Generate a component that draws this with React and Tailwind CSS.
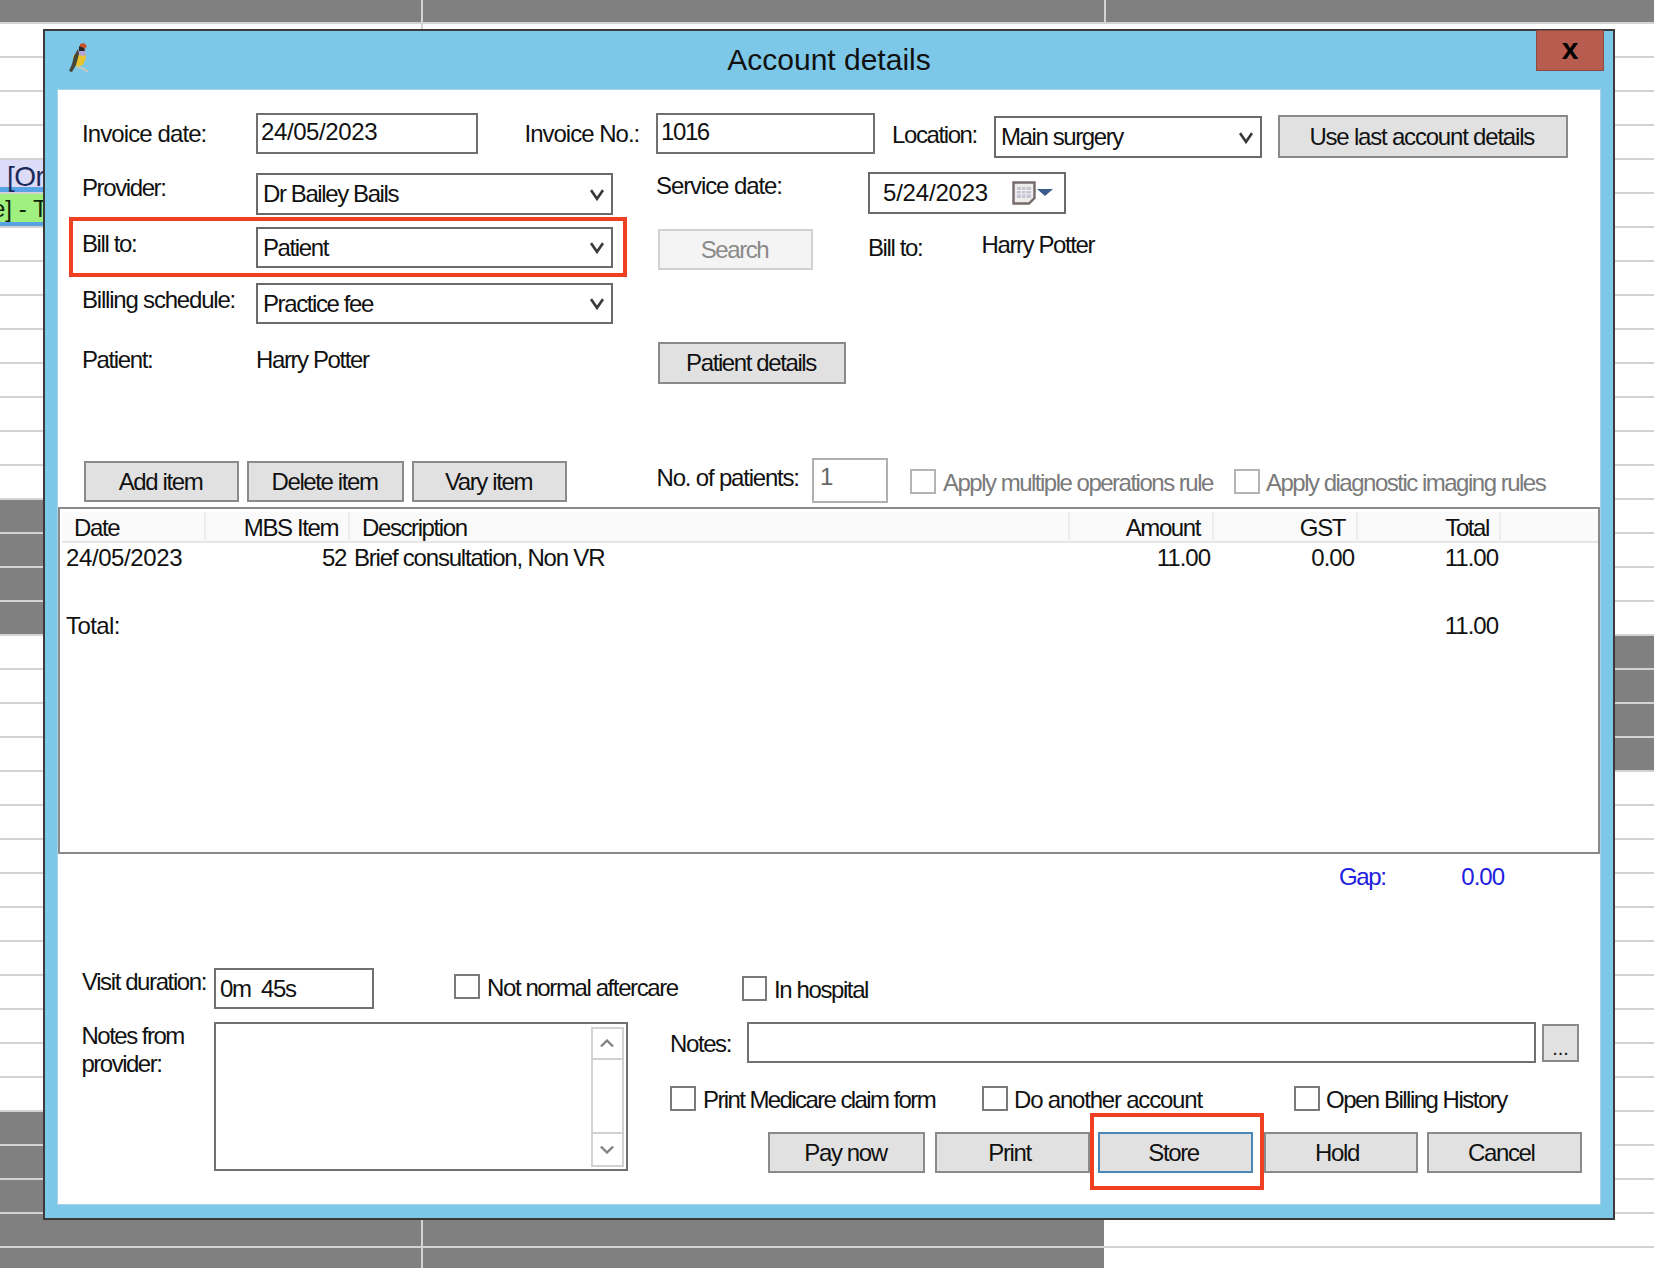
import { Fragment } from "react";

const ROWS = Array.from({ length: 38 }, (_, i) => i);

function GridRow({ i }) {
  const leftGray = i === 0 || (i >= 15 && i <= 18) || i >= 33;
  const midGray = i === 0 || i >= 33;
  const rightGray = i === 0 || (i >= 19 && i <= 22);
  return (
    <div className={`flex shrink-0 border-b-2 border-[#d3d3d3] ${i === 0 ? "h-[24px]" : "h-[34px]"}`}>
      <div className={`w-[421px] shrink-0 overflow-hidden ${leftGray ? "bg-[#808080]" : "bg-white"}`}>
        {i === 5 && <div className="h-full pl-[7px] pt-[3px] bg-[#dcdcf8] border-b-[5px] border-[#5aa2e6] text-[28px] leading-[28px] tracking-[-0.5px] text-[#1c2a5a] whitespace-pre">[Or</div>}
        {i === 6 && <div className="h-full -ml-[8px] pt-[2px] bg-[#a0f080] border-b-[4px] border-[#5aa2e6] text-[24px] leading-[26px] tracking-[0px] text-[#10240c] whitespace-pre">e] - T</div>}
      </div>
      <div className={`w-[683px] shrink-0 border-l-2 border-[#d3d3d3] ${midGray ? "bg-[#808080]" : "bg-white"}`} />
      <div className={`flex-1 ${i === 0 ? "border-l-2 border-[#d3d3d3]" : ""} ${rightGray ? "bg-[#808080]" : "bg-white"}`} />
    </div>
  );
}

function Lbl({ className = "", children }) {
  return <div className={`shrink-0 leading-[28px] whitespace-nowrap ${className}`}>{children}</div>;
}

function Input({ className = "", muted = false, children }) {
  return (
    <div className={`shrink-0 bg-white border-2 pt-[3px] leading-[28px] whitespace-pre ${muted ? "border-[#b0b0b0] pl-[6px] text-[#666]" : "border-[#707070] pl-[3px]"} ${className}`}>
      {children}
    </div>
  );
}

function Chevron({ up = false, className = "" }) {
  return (
    <svg viewBox="0 0 14 12" className={`shrink-0 ${className}`} fill="none" preserveAspectRatio="none">
      <polyline points={up ? "1,10 7,2 13,10" : "1,2 7,10 13,2"} stroke="currentColor" strokeWidth="2.6" />
    </svg>
  );
}

function Sel({ className = "", children }) {
  return (
    <div className={`shrink-0 flex items-center justify-between bg-white border-2 border-[#6a6a6a] pl-[5px] pr-[7px] whitespace-nowrap ${className}`}>
      <span>{children}</span>
      <Chevron className="w-[14px] h-[13px] text-[#3a3a3a]" />
    </div>
  );
}

const BTN_TONES = {
  normal: "bg-[#e1e1e1] border-[#8a8a8a]",
  disabled: "bg-[#f4f4f4] border-[#d2d2d2] text-[#8a8a8a]",
  focused: "bg-[#e1e1e1] border-[#4a86b8]",
};

function Btn({ className = "", tone = "normal", children }) {
  return (
    <div className={`shrink-0 flex items-center justify-center border-2 whitespace-nowrap ${BTN_TONES[tone]} ${className}`}>
      {children}
    </div>
  );
}

function Chk({ className = "", box = "w-[26px]", gap = "ml-[7px]", muted = false, children }) {
  return (
    <div className={`shrink-0 flex items-start ${className}`}>
      <div className={`h-[25px] shrink-0 bg-white border-2 ${muted ? "border-[#b4b4b4]" : "border-[#7a7a7a]"} ${box}`} />
      <span className={`leading-[28px] whitespace-nowrap ${gap} ${muted ? "text-[#7a7a7a]" : ""}`}>{children}</span>
    </div>
  );
}

function Bird() {
  return (
    <svg viewBox="0 0 20 30" className="w-[20px] h-[30px] shrink-0">
      <path d="M4 13 L9 8 L16 9 L17 15 L14 22 L8 24 L5 20 Z" fill="#e6c52e" />
      <path d="M9 7 L15 7 L17 11 L15 13 L9 12 Z" fill="#b7a4d6" />
      <path d="M9 6 L5 13 L3 21 L0 28 L3 29 L7 22 L9 15 L10 10 Z" fill="#45463a" />
      <path d="M11 1 L15 0 L18 3 L16 6 L11 5 Z" fill="#c9512b" />
      <path d="M10 3 L15 5 L16 8 L10 8 Z" fill="#262626" />
      <path d="M8 24 L13 25 L19 29" fill="none" stroke="#cfc8b8" strokeWidth="1.8" />
    </svg>
  );
}

function CalendarIcon() {
  return (
    <svg viewBox="0 0 42 24" className="w-[42px] h-[24px] shrink-0">
      <path d="M1.5 1.5 H22.5 V17 L17 22.5 H1.5 Z" fill="#eeecea" stroke="#75696a" strokeWidth="2.4" />
      <path d="M5 6 H19 V17 H5 Z" fill="#c4c6d2" />
      <path d="M5 9.5 H19 M5 13 H19 M9.5 6 V17 M14 6 V17" stroke="#eeeef2" strokeWidth="1" />
      <path d="M25 8 H41 L33 15 Z" fill="#3b5b8c" />
    </svg>
  );
}

const GRID_COLS = "grid grid-cols-[144px_144px_720px_144px_144px_143px_1fr]";

function HeadCell({ className = "", children }) {
  return <div className={`h-full leading-[31px] border-r-2 border-[#ededed] whitespace-nowrap ${className}`}>{children}</div>;
}

function ItemsTable() {
  return (
    <div className="shrink-0 w-[1542px] h-[347px] bg-white border-2 border-[#8a8a8a] pt-[3px] pl-[2px]">
      <div className={`${GRID_COLS} h-[31px] bg-[#fafafa] border-b-2 border-[#e6e6e6]`}>
        <HeadCell className="pl-[12px]">Date</HeadCell>
        <HeadCell className="pr-[10px] text-right">MBS Item</HeadCell>
        <HeadCell className="pl-[12px]">Description</HeadCell>
        <HeadCell className="pr-[12px] text-right">Amount</HeadCell>
        <HeadCell className="pr-[11px] text-right">GST</HeadCell>
        <HeadCell className="pr-[10px] text-right">Total</HeadCell>
        <div />
      </div>
      <div className={`${GRID_COLS} pt-[1px] leading-[28px] whitespace-nowrap`}>
        <div className="pl-[4px] tracking-[-0.4px]">24/05/2023</div>
        <div className="pr-[4px] text-right">52</div>
        <div className="pl-[4px] tracking-[-1.2px]">Brief consultation, Non VR</div>
        <div className="pr-[4px] text-right tracking-[-1px]">11.00</div>
        <div className="pr-[4px] text-right tracking-[-1px]">0.00</div>
        <div className="pr-[3px] text-right tracking-[-1px]">11.00</div>
      </div>
      <div className={`${GRID_COLS} mt-[40px] leading-[28px] whitespace-nowrap`}>
        <div className="pl-[4px] tracking-[-0.6px]">Total:</div>
        <div />
        <div />
        <div />
        <div />
        <div className="pr-[3px] text-right tracking-[-1px]">11.00</div>
      </div>
    </div>
  );
}

function AccountWindow() {
  return (
    <div className="absolute left-[43px] top-[29px] w-[1572px] h-[1191px] flex flex-col bg-[#7dc8e8] border-2 border-[#3a3a3a]">
      {/* title bar */}
      <div className="flex items-start h-[59px] shrink-0">
        <div className="ml-[24px] mt-[12px]"><Bird /></div>
        <div className="flex-1 pl-[33px] text-center text-[30px] leading-[57px] tracking-[0px] text-[#111]">Account details</div>
        <div className="w-[68px] h-[41px] mr-[9px] -mt-[1px] flex items-center justify-center pb-[3px] bg-[#b85c50] border border-[#8c4a40] text-black font-bold text-[30px] leading-none tracking-normal">x</div>
      </div>

      {/* client area */}
      <div className="flex-1 mx-[13px] mb-[14px] bg-white flex flex-col shadow-[0_0_0_1px_#a9d2e6] text-[#111]">
        <div className="flex items-start h-[59px] mt-[23px] pl-[24px] shrink-0">
          <Lbl className="w-[174px] mt-[7px] tracking-[-0.9px]">Invoice date:</Lbl>
          <Input className="w-[222px] h-[41px] tracking-[-0.4px]">24/05/2023</Input>
          <Lbl className="ml-[46.5px] w-[131.5px] mt-[7px] tracking-[-1px]">Invoice No.:</Lbl>
          <Input className="w-[219px] h-[41px]">1016</Input>
          <Lbl className="ml-[17px] w-[102px] mt-[8px]">Location:</Lbl>
          <Sel className="w-[267.5px] h-[42px] mt-[3px]">Main surgery</Sel>
          <Btn className="ml-[16.5px] w-[289.5px] h-[43px] mt-[2px] pr-[2px] tracking-[-1.2px]">Use last account details</Btn>
        </div>

        <div className="flex items-start h-[45px] pl-[24px] shrink-0">
          <Lbl className="w-[174px] mt-[2px]">Provider:</Lbl>
          <Sel className="w-[357px] h-[42px] mt-[1px]">Dr Bailey Bails</Sel>
          <Lbl className="ml-[43px] w-[212px] tracking-[-1.1px]">Service date:</Lbl>
          <div className="w-[197.5px] h-[42px] shrink-0 flex items-center bg-white border-2 border-[#6a6a6a] pl-[13px] whitespace-nowrap">
            <span className="w-[129px] shrink-0 tracking-[-0.2px]">5/24/2023</span>
            <CalendarIcon />
          </div>
        </div>

        <div className="flex items-start h-[60px] pl-[11px] shrink-0">
          <div className="w-[558px] h-[60px] shrink-0 flex items-start border-4 border-[#ef4023]">
            <Lbl className="ml-[9px] w-[174px] mt-[9px]">Bill to:</Lbl>
            <Sel className="w-[357px] h-[41px] mt-[6px]">Patient</Sel>
          </div>
          <Btn tone="disabled" className="ml-[31px] w-[155px] h-[41px] mt-[12px] pr-[2px]">Search</Btn>
          <Lbl className="ml-[55px] w-[113.5px] mt-[17px]">Bill to:</Lbl>
          <Lbl className="mt-[14px]">Harry Potter</Lbl>
        </div>

        <div className="flex items-start h-[59px] mt-[6px] pl-[24px] shrink-0">
          <Lbl className="w-[174px] mt-[3px] tracking-[-1.2px]">Billing schedule:</Lbl>
          <Sel className="w-[357px] h-[41px]">Practice fee</Sel>
        </div>

        <div className="flex items-start h-[116px] pl-[24px] shrink-0">
          <Lbl className="w-[174px] mt-[4px]">Patient:</Lbl>
          <Lbl className="w-[402px] mt-[4px]">Harry Potter</Lbl>
          <Btn className="w-[188px] h-[42px] pr-[2px]">Patient details</Btn>
        </div>

        <div className="flex items-start h-[49px] shrink-0 pl-[26px]">
          <Btn className="w-[155px] h-[41px] mt-[3px] pr-[2px]">Add item</Btn>
          <Btn className="ml-[8px] w-[157px] h-[41px] mt-[3px] pr-[2px]">Delete item</Btn>
          <Btn className="ml-[8px] w-[155px] h-[41px] mt-[3px] pr-[2px]">Vary item</Btn>
          <Lbl className="ml-[89.6px] w-[155.4px] mt-[6px] tracking-[-1.2px]">No. of patients:</Lbl>
          <Input muted className="w-[76px] h-[45px]">1</Input>
          <Chk muted className="ml-[22px] mt-[11px] w-[302px] tracking-[-1.5px]">Apply multiple operations rule</Chk>
          <Chk muted gap="ml-[6px]" className="ml-[22px] mt-[11px] tracking-[-1.5px]">Apply diagnostic imaging rules</Chk>
        </div>

        <ItemsTable />

        <div className="flex h-[28px] mt-[9px] ml-[1281px] shrink-0 leading-[28px] text-[#2020e0]">
          <div className="w-[100px]">Gap:</div>
          <div className="w-[65px] text-right tracking-[-1px]">0.00</div>
        </div>

        <div className="flex items-start h-[54px] mt-[77px] pl-[24px] shrink-0">
          <Lbl className="w-[132px]">Visit duration:</Lbl>
          <div className="w-[160px] h-[41px] shrink-0 flex items-center bg-white border-2 border-[#707070] pl-[4px] whitespace-pre">0m  45s</div>
          <Chk className="ml-[80px] mt-[6px] w-[288px]">Not normal aftercare</Chk>
          <Chk box="w-[25px]" className="mt-[8px]">In hospital</Chk>
        </div>

        <div className="flex items-start pl-[24px] shrink-0">
          <Lbl className="w-[132px] leading-[25px] -ml-[0.5px] mr-[0.5px] tracking-[-1.5px]">Notes from<br />provider:</Lbl>
          <div className="w-[413.5px] h-[149px] shrink-0 flex justify-end bg-white border-2 border-[#707070] pt-[3px] pr-[2px]">
            <div className="w-[32.5px] h-[140px] flex flex-col border-2 border-[#d2d2d2] text-[#808080]">
              <div className="h-[31px] shrink-0 flex items-center justify-center border-b-2 border-[#d2d2d2]">
                <Chevron up className="w-[14px] h-[9px]" />
              </div>
              <div className="flex-1" />
              <div className="h-[33px] shrink-0 flex items-center justify-center border-t-2 border-[#d2d2d2]">
                <Chevron className="w-[14px] h-[9px]" />
              </div>
            </div>
          </div>

          <div className="ml-[42.5px] flex flex-col shrink-0">
            <div className="flex items-start h-[64px]">
              <Lbl className="w-[77px] mt-[8px]">Notes:</Lbl>
              <div className="w-[789px] h-[41px] shrink-0 bg-white border-2 border-[#707070]" />
              <Btn className="ml-[6px] mt-[2px] w-[37px] h-[38px] items-end pb-[2px] text-[20px] leading-[20px] tracking-[0px]">...</Btn>
            </div>
            <div className="flex items-start h-[27px]">
              <Chk className="w-[312px] tracking-[-1.6px]">Print Medicare claim form</Chk>
              <Chk gap="ml-[6px]" className="w-[312px] tracking-[-1.2px]">Do another account</Chk>
              <Chk gap="ml-[6px]" className="tracking-[-1.5px]">Open Billing History</Chk>
            </div>
            <div className="flex items-start h-[77px]">
              <Btn className="ml-[98px] mt-[19px] w-[157px] h-[41px] pr-[2px]">Pay now</Btn>
              <Btn className="ml-[10px] mt-[19px] w-[155px] h-[41px] pr-[6px]">Print</Btn>
              <div className="w-[173.5px] h-[77px] shrink-0 border-4 border-[#ef4023] pl-[4px] pt-[15px]">
                <Btn tone="focused" className="w-[155px] h-[41px] pr-[4px]">Store</Btn>
              </div>
              <Btn className="mt-[19px] w-[154px] h-[41px] pr-[7px]">Hold</Btn>
              <Btn className="ml-[9px] mt-[19px] w-[155.5px] h-[41px] pr-[6px]">Cancel</Btn>
            </div>
          </div>
        </div>
      </div>
    </div>
  );
}

export default function App() {
  return (
    <div className="relative w-[1654px] h-[1268px] overflow-hidden bg-white font-['Liberation_Sans',Arial,sans-serif] text-[24px] tracking-[-1.4px]">
      <div className="flex flex-col">
        {ROWS.map(i => (
          <Fragment key={i}>
            <GridRow i={i} />
          </Fragment>
        ))}
      </div>
      <AccountWindow />
    </div>
  );
}
